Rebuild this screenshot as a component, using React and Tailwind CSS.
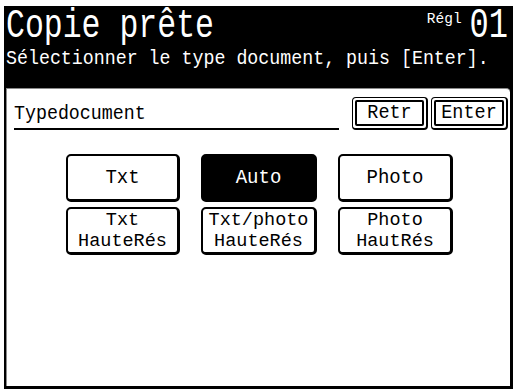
const lcd = "font-['Liberation_Mono','DejaVu_Sans_Mono',monospace]";

function OptionButton({ lines, active }) {
  const single = lines.length === 1;
  return (
    <div
      className={`h-[48px] flex flex-col items-center justify-center rounded-[5px] border-2 border-r-[3px] border-b-[3px] border-black ${
        single ? "text-[19px] leading-[22px]" : "text-[18.5px] leading-[21px]"
      } ${active ? "bg-black text-white" : "bg-white text-black"}`}
    >
      {lines.map((l) => (
        <span key={l} className={single ? "block scale-y-110" : "block"}>
          {l}
        </span>
      ))}
    </div>
  );
}

function KeyButton({ label, width }) {
  return (
    <div
      className={`${width} h-[33px] rounded-[4px] border border-r-2 border-b-2 border-black p-[2px] bg-white`}
    >
      <div className="h-full rounded-[2px] border-2 border-black flex items-center justify-center text-[18.5px] pt-[1px]">
        <span className="inline-block scale-y-110">{label}</span>
      </div>
    </div>
  );
}

export default function App() {
  return (
    <div className={`w-[517px] h-[392px] bg-white pt-[6px] pl-[4px] ${lcd}`}>
      <div className="w-[509px] h-[383px] bg-black flex flex-col">
        {/* header */}
        <div className="h-[82px] text-white pl-[2px] pr-[5px]">
          <div className="flex items-start h-[37px]">
            <span className="inline-block text-[31.5px] leading-[32px] scale-y-[1.3] origin-top">
              Copie prête
            </span>
            <span className="ml-auto mt-[5px] text-[14.5px] leading-[16px]">
              Régl
            </span>
            <span className="ml-[8px] inline-block text-[32px] leading-[30px] scale-y-[1.35] origin-top">
              01
            </span>
          </div>
          <div className="text-[18.3px] leading-[20px] whitespace-nowrap mt-[5px]">
            <span className="inline-block scale-y-110">
              Sélectionner le type document, puis [Enter].
            </span>
          </div>
        </div>

        {/* panel */}
        <div className="flex-1 ml-[2px] mr-[3px] mb-[3px] bg-white border-l border-t border-[#8a8a8a] rounded-tr-[4px] text-black">
          <div className="flex items-start pl-[7px] pr-[2px] pt-[8px]">
            <div className="flex-1 mt-[5px] mr-[13px] border-b-2 border-black h-[28px] text-[18.3px] leading-[22px]">
              <span className="inline-block scale-y-110">Typedocument</span>
            </div>
            <KeyButton label="Retr" width="w-[76px]" />
            <div className="w-[3px]" />
            <KeyButton label="Enter" width="w-[77px]" />
          </div>

          <div className="ml-[59px] mt-[24px] grid grid-cols-[114px_116px_115px] gap-x-[21px] gap-y-[5px] w-fit">
            <OptionButton lines={["Txt"]} />
            <OptionButton lines={["Auto"]} active />
            <OptionButton lines={["Photo"]} />
            <OptionButton lines={["Txt", "HauteRés"]} />
            <OptionButton lines={["Txt/photo", "HauteRés"]} />
            <OptionButton lines={["Photo", "HautRés"]} />
          </div>
        </div>
      </div>
    </div>
  );
}
